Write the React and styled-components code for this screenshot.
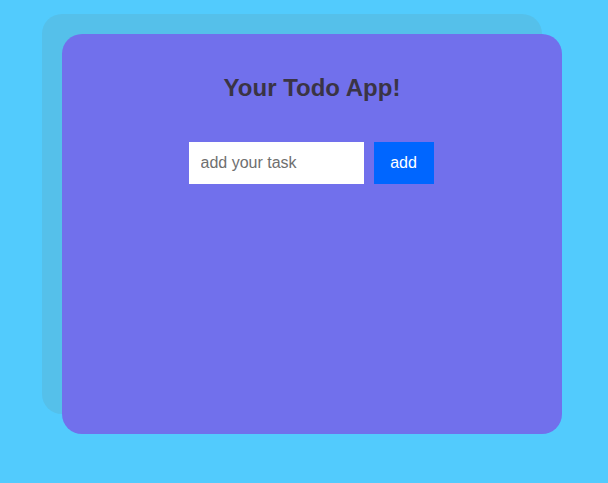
import React from "react";
import styled, { createGlobalStyle } from "styled-components";

const Global = createGlobalStyle`
  html, body { margin: 0; padding: 0; }
  body {
    background: #52cbfd;
    font-family: "Liberation Sans", Arial, sans-serif;
    min-height: 483px;
  }
`;

const Page = styled.div`
  padding: 34px 0 0 62px;
`;

const Card = styled.div`
  width: 500px;
  height: 400px;
  box-sizing: border-box;
  background: #7170ec;
  border-radius: 20px;
  box-shadow: -20px -20px 0 #55c0ea;
  display: flex;
  flex-direction: column;
  align-items: center;
  padding-top: 40px;
`;

const Title = styled.h1`
  margin: 0;
  font-size: 24px;
  line-height: 28px;
  font-weight: 700;
  color: #3a3444;
`;

const Form = styled.form`
  display: flex;
  gap: 10px;
  margin-top: 40px;
  margin-right: 2px;
`;

const Input = styled.input`
  width: 175px;
  height: 42px;
  box-sizing: border-box;
  border: none;
  outline: none;
  padding: 0 12px;
  font-family: inherit;
  font-size: 16px;
  background: #fff;
  &::placeholder { color: #6f6f6f; }
`;

const Button = styled.button`
  width: 60px;
  height: 42px;
  border: none;
  background: #0066ff;
  color: #fff;
  font-family: inherit;
  font-size: 16px;
  padding: 0;
  cursor: pointer;
`;

export default function App() {
  return (
    <>
      <Global />
      <Page>
        <Card>
          <Title>Your Todo App!</Title>
          <Form onSubmit={(e) => e.preventDefault()}>
            <Input placeholder="add your task" />
            <Button type="submit">add</Button>
          </Form>
        </Card>
      </Page>
    </>
  );
}
